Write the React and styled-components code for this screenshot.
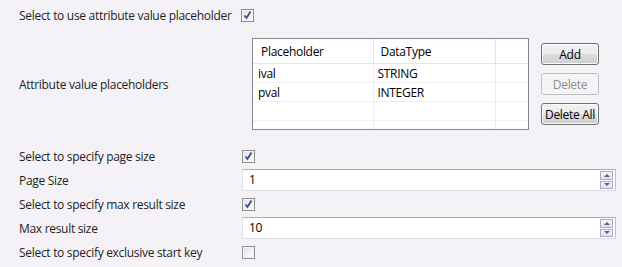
import React from "react";
import styled, { createGlobalStyle } from "styled-components";

const GlobalStyle = createGlobalStyle`
  html, body {
    margin: 0;
    padding: 0;
    background: #f4f2f6;
  }
  body {
    font-family: "Open Sans", "Noto Sans", sans-serif;
    font-size: 12px;
    letter-spacing: -0.3px;
    color: #1e1e1e;
  }
`;

const Page = styled.div`
  width: 622px;
  height: 267px;
  padding-left: 19px;
  box-sizing: border-box;
  overflow: hidden;
`;

const Row = styled.div`
  display: flex;
  align-items: center;
  height: ${(p) => p.h || 24}px;
`;

const TableRow = styled.div`
  display: flex;
  align-items: center;
  padding: 8px 0 14px;
`;

const Label = styled.div`
  width: 223px;
  flex: none;
  white-space: nowrap;
`;

const Box = styled.span`
  width: 13px;
  height: 13px;
  display: inline-flex;
  box-sizing: border-box;
  border: 1px solid #8e8f8f;
  background: linear-gradient(135deg, #dcdee3 0%, #f4f5f7 60%, #ffffff 100%);
  box-shadow: inset 0 0 0 1px #f4f4f4;
  margin-left: ${(p) => p.shift || 0}px;
`;

const TableBox = styled.div`
  margin-left: 10px;
  width: 277px;
  height: 92px;
  box-sizing: border-box;
  border: 1px solid #828790;
  background: #fff;
  overflow: hidden;
`;

const Grid = styled.table`
  border-collapse: collapse;
  table-layout: fixed;
  width: 100%;
  color: #000;
`;

const Th = styled.th`
  height: 24px;
  padding: 0 0 0 ${(p) => p.pad || 8}px;
  text-align: left;
  font-weight: normal;
  border-right: 1px solid #e3e3e3;
  border-bottom: 1px solid #e5e5e5;
  &:last-child {
    border-right: none;
  }
`;

const Td = styled.td`
  height: 18px;
  padding: 0 0 0 ${(p) => p.pad || 5}px;
  border-bottom: 1px solid #efefef;
  border-right: 1px solid ${(p) => p.line || "#ececec"};
  &:last-child {
    border-right: none;
  }
`;

const Buttons = styled.div`
  margin-left: 12px;
  display: flex;
  flex-direction: column;
  gap: 8px;
`;

const Button = styled.button`
  width: 58px;
  height: 22px;
  padding: 0;
  font: inherit;
  letter-spacing: inherit;
  border-radius: 3px;
  border: 1px solid ${(p) => (p.disabled ? "#bcbfc4" : "#707070")};
  color: ${(p) => (p.disabled ? "#8d8d8d" : "#000")};
  background: ${(p) =>
    p.disabled
      ? "#f4f4f4"
      : "linear-gradient(#f2f2f2 0%, #ebebeb 50%, #dddddd 51%, #cfcfcf 100%)"};
  box-shadow: ${(p) => (p.disabled ? "none" : "inset 0 0 0 1px #fcfcfc")};
`;

const Field = styled.div`
  width: 374px;
  height: 22px;
  box-sizing: border-box;
  display: flex;
  border: 1px solid #abadb3;
  border-bottom-color: #dcdde3;
  border-left-color: #dfe0e6;
  border-right-color: #bfc1c8;
  background: #fff;
`;

const FieldText = styled.div`
  flex: 1;
  padding-left: 6px;
  line-height: 20px;
  color: #000;
`;

const Spinner = styled.div`
  width: 13px;
  margin: 1px 2px 1px 0;
  display: flex;
  flex-direction: column;
  gap: 1px;
`;

const SpinHalf = styled.div`
  flex: 1;
  box-sizing: border-box;
  border: 1px solid #a9acc8;
  background: linear-gradient(#f6f6fa, #dfe0ec);
  display: flex;
  align-items: center;
  justify-content: center;
`;

const Arrow = styled.span`
  width: 0;
  height: 0;
  border-left: 3px solid transparent;
  border-right: 3px solid transparent;
  ${(p) =>
    p.down
      ? "border-top: 3px solid #5a6386;"
      : "border-bottom: 3px solid #5a6386;"}
`;

function CheckBox({ checked, shift }) {
  return (
    <Box shift={shift}>
      {checked && (
        <svg width="11" height="11" viewBox="0 0 11 11">
          <path
            d="M2.5 5.5 L4.5 8 L8.5 1.5"
            fill="none"
            stroke="#3d4f87"
            strokeWidth="1.8"
          />
        </svg>
      )}
    </Box>
  );
}

function SpinField({ value }) {
  return (
    <Field>
      <FieldText>{value}</FieldText>
      <Spinner>
        <SpinHalf>
          <Arrow />
        </SpinHalf>
        <SpinHalf>
          <Arrow down />
        </SpinHalf>
      </Spinner>
    </Field>
  );
}

const rows = [
  ["ival", "STRING"],
  ["pval", "INTEGER"],
  ["", ""],
  ["", ""],
];

export default function App() {
  return (
    <Page>
      <GlobalStyle />
      <Row h={30}>
        <Label>Select to use attribute value placeholder</Label>
        <CheckBox checked shift={-1} />
      </Row>
      <TableRow>
        <Label>Attribute value placeholders</Label>
        <TableBox>
          <Grid>
            <colgroup>
              <col style={{ width: 120 }} />
              <col style={{ width: 122 }} />
              <col />
            </colgroup>
            <thead>
              <tr>
                <Th>Placeholder</Th>
                <Th pad={7}>DataType</Th>
                <Th />
              </tr>
            </thead>
            <tbody>
              {rows.map((r, i) => (
                <tr key={i}>
                  <Td>{r[0]}</Td>
                  <Td pad={4} line="#e6edf6">
                    {r[1]}
                  </Td>
                  <Td />
                </tr>
              ))}
            </tbody>
          </Grid>
        </TableBox>
        <Buttons>
          <Button>Add</Button>
          <Button disabled>Delete</Button>
          <Button>Delete All</Button>
        </Buttons>
      </TableRow>
      <Row>
        <Label>Select to specify page size</Label>
        <CheckBox checked />
      </Row>
      <Row>
        <Label>Page Size</Label>
        <SpinField value="1" />
      </Row>
      <Row>
        <Label>Select to specify max result size</Label>
        <CheckBox checked />
      </Row>
      <Row>
        <Label>Max result size</Label>
        <SpinField value="10" />
      </Row>
      <Row>
        <Label>Select to specify exclusive start key</Label>
        <CheckBox />
      </Row>
    </Page>
  );
}
